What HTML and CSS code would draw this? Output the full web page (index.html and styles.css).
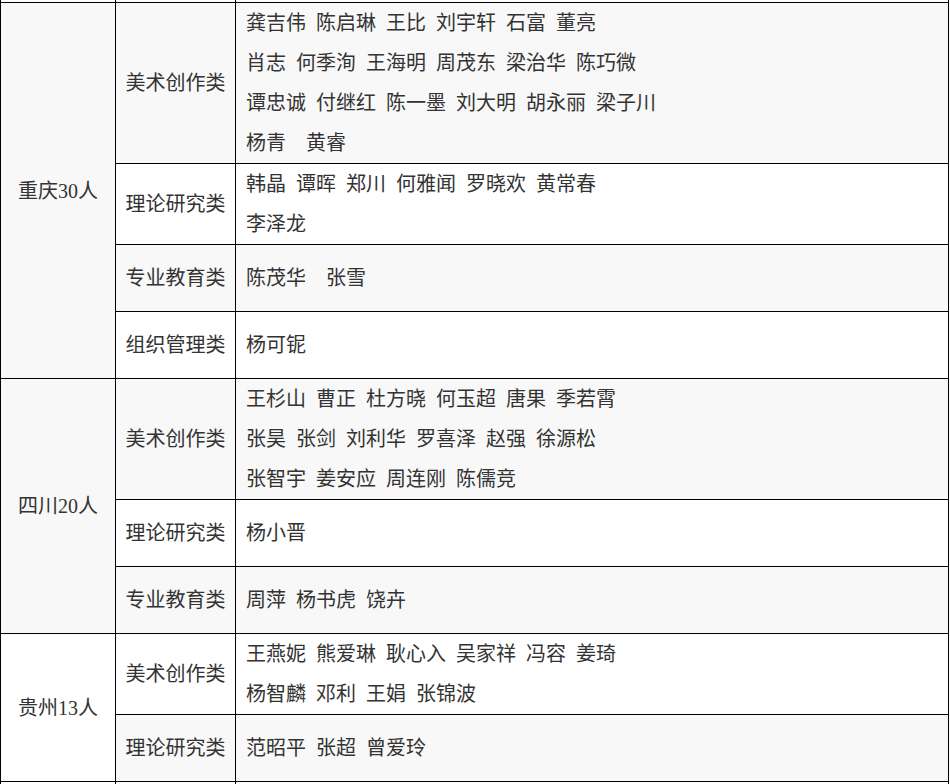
FILE: index.html
```html
<!DOCTYPE html>
<html lang="zh-CN">
<head>
<meta charset="utf-8">
<title>名单</title>
<link rel="stylesheet" href="styles.css">
</head>
<body>
<table class="list">
  <colgroup>
    <col class="c-prov">
    <col class="c-cat">
    <col class="c-names">
  </colgroup>
  <tbody>
    <tr class="cut top"><td></td><td></td><td></td></tr>

    <tr class="gray">
      <td class="prov" rowspan="4">重庆30人</td>
      <td class="cat">美术创作类</td>
      <td class="names">
        <div>龚吉伟&nbsp;&nbsp;陈启琳&nbsp;&nbsp;王比&nbsp;&nbsp;刘宇轩&nbsp;&nbsp;石富&nbsp;&nbsp;董亮</div>
        <div>肖志&nbsp;&nbsp;何季洵&nbsp;&nbsp;王海明&nbsp;&nbsp;周茂东&nbsp;&nbsp;梁治华&nbsp;&nbsp;陈巧微</div>
        <div>谭忠诚&nbsp;&nbsp;付继红&nbsp;&nbsp;陈一墨&nbsp;&nbsp;刘大明&nbsp;&nbsp;胡永丽&nbsp;&nbsp;梁子川</div>
        <div>杨青&nbsp;&nbsp;&nbsp;&nbsp;黄睿</div>
      </td>
    </tr>
    <tr class="white">
      <td class="cat">理论研究类</td>
      <td class="names">
        <div>韩晶&nbsp;&nbsp;谭晖&nbsp;&nbsp;郑川&nbsp;&nbsp;何雅闻&nbsp;&nbsp;罗晓欢&nbsp;&nbsp;黄常春</div>
        <div>李泽龙</div>
      </td>
    </tr>
    <tr class="gray">
      <td class="cat">专业教育类</td>
      <td class="names"><div>陈茂华&nbsp;&nbsp;&nbsp;&nbsp;张雪</div></td>
    </tr>
    <tr class="white">
      <td class="cat">组织管理类</td>
      <td class="names"><div>杨可铌</div></td>
    </tr>

    <tr class="gray">
      <td class="prov" rowspan="3">四川20人</td>
      <td class="cat">美术创作类</td>
      <td class="names">
        <div>王杉山&nbsp;&nbsp;曹正&nbsp;&nbsp;杜方晓&nbsp;&nbsp;何玉超&nbsp;&nbsp;唐果&nbsp;&nbsp;季若霄</div>
        <div>张昊&nbsp;&nbsp;张剑&nbsp;&nbsp;刘利华&nbsp;&nbsp;罗喜泽&nbsp;&nbsp;赵强&nbsp;&nbsp;徐源松</div>
        <div>张智宇&nbsp;&nbsp;姜安应&nbsp;&nbsp;周连刚&nbsp;&nbsp;陈儒竞</div>
      </td>
    </tr>
    <tr class="white">
      <td class="cat">理论研究类</td>
      <td class="names"><div>杨小晋</div></td>
    </tr>
    <tr class="gray">
      <td class="cat">专业教育类</td>
      <td class="names"><div>周萍&nbsp;&nbsp;杨书虎&nbsp;&nbsp;饶卉</div></td>
    </tr>

    <tr class="white">
      <td class="prov" rowspan="2">贵州13人</td>
      <td class="cat">美术创作类</td>
      <td class="names">
        <div>王燕妮&nbsp;&nbsp;熊爱琳&nbsp;&nbsp;耿心入&nbsp;&nbsp;吴家祥&nbsp;&nbsp;冯容&nbsp;&nbsp;姜琦</div>
        <div>杨智麟&nbsp;&nbsp;邓利&nbsp;&nbsp;王娟&nbsp;&nbsp;张锦波</div>
      </td>
    </tr>
    <tr class="gray">
      <td class="cat">理论研究类</td>
      <td class="names"><div>范昭平&nbsp;&nbsp;张超&nbsp;&nbsp;曾爱玲</div></td>
    </tr>

    <tr class="cut bottom"><td></td><td></td><td></td></tr>
  </tbody>
</table>
</body>
</html>
```

FILE: styles.css
```css
html, body {
  margin: 0;
  padding: 0;
  background: #fff;
  overflow: hidden;
}

.list {
  border-collapse: collapse;
  table-layout: fixed;
  width: 949px;
  font-family: "Liberation Serif", "Noto Sans CJK SC", sans-serif;
  font-size: 20px;
  line-height: 40px;
  color: #333;
}

.c-prov { width: 115px; }
.c-cat { width: 120px; }

.list td {
  border: 1px solid #000;
  padding: 0;
  vertical-align: middle;
}

.gray td { background: #f8f8f8; }
.white td { background: #fff; }

.prov {
  text-align: center;
  padding: 0 4px;
}

.list td.cat {
  text-align: center;
  padding: 13px 0;
}

.list td.names {
  text-align: left;
  padding: 0 10px;
}

.cut td {
  background: #fff;
}

.cut.top td {
  border-top: none;
  height: 2px;
}

.cut.bottom td {
  border-bottom: none;
  height: 20px;
}
```
